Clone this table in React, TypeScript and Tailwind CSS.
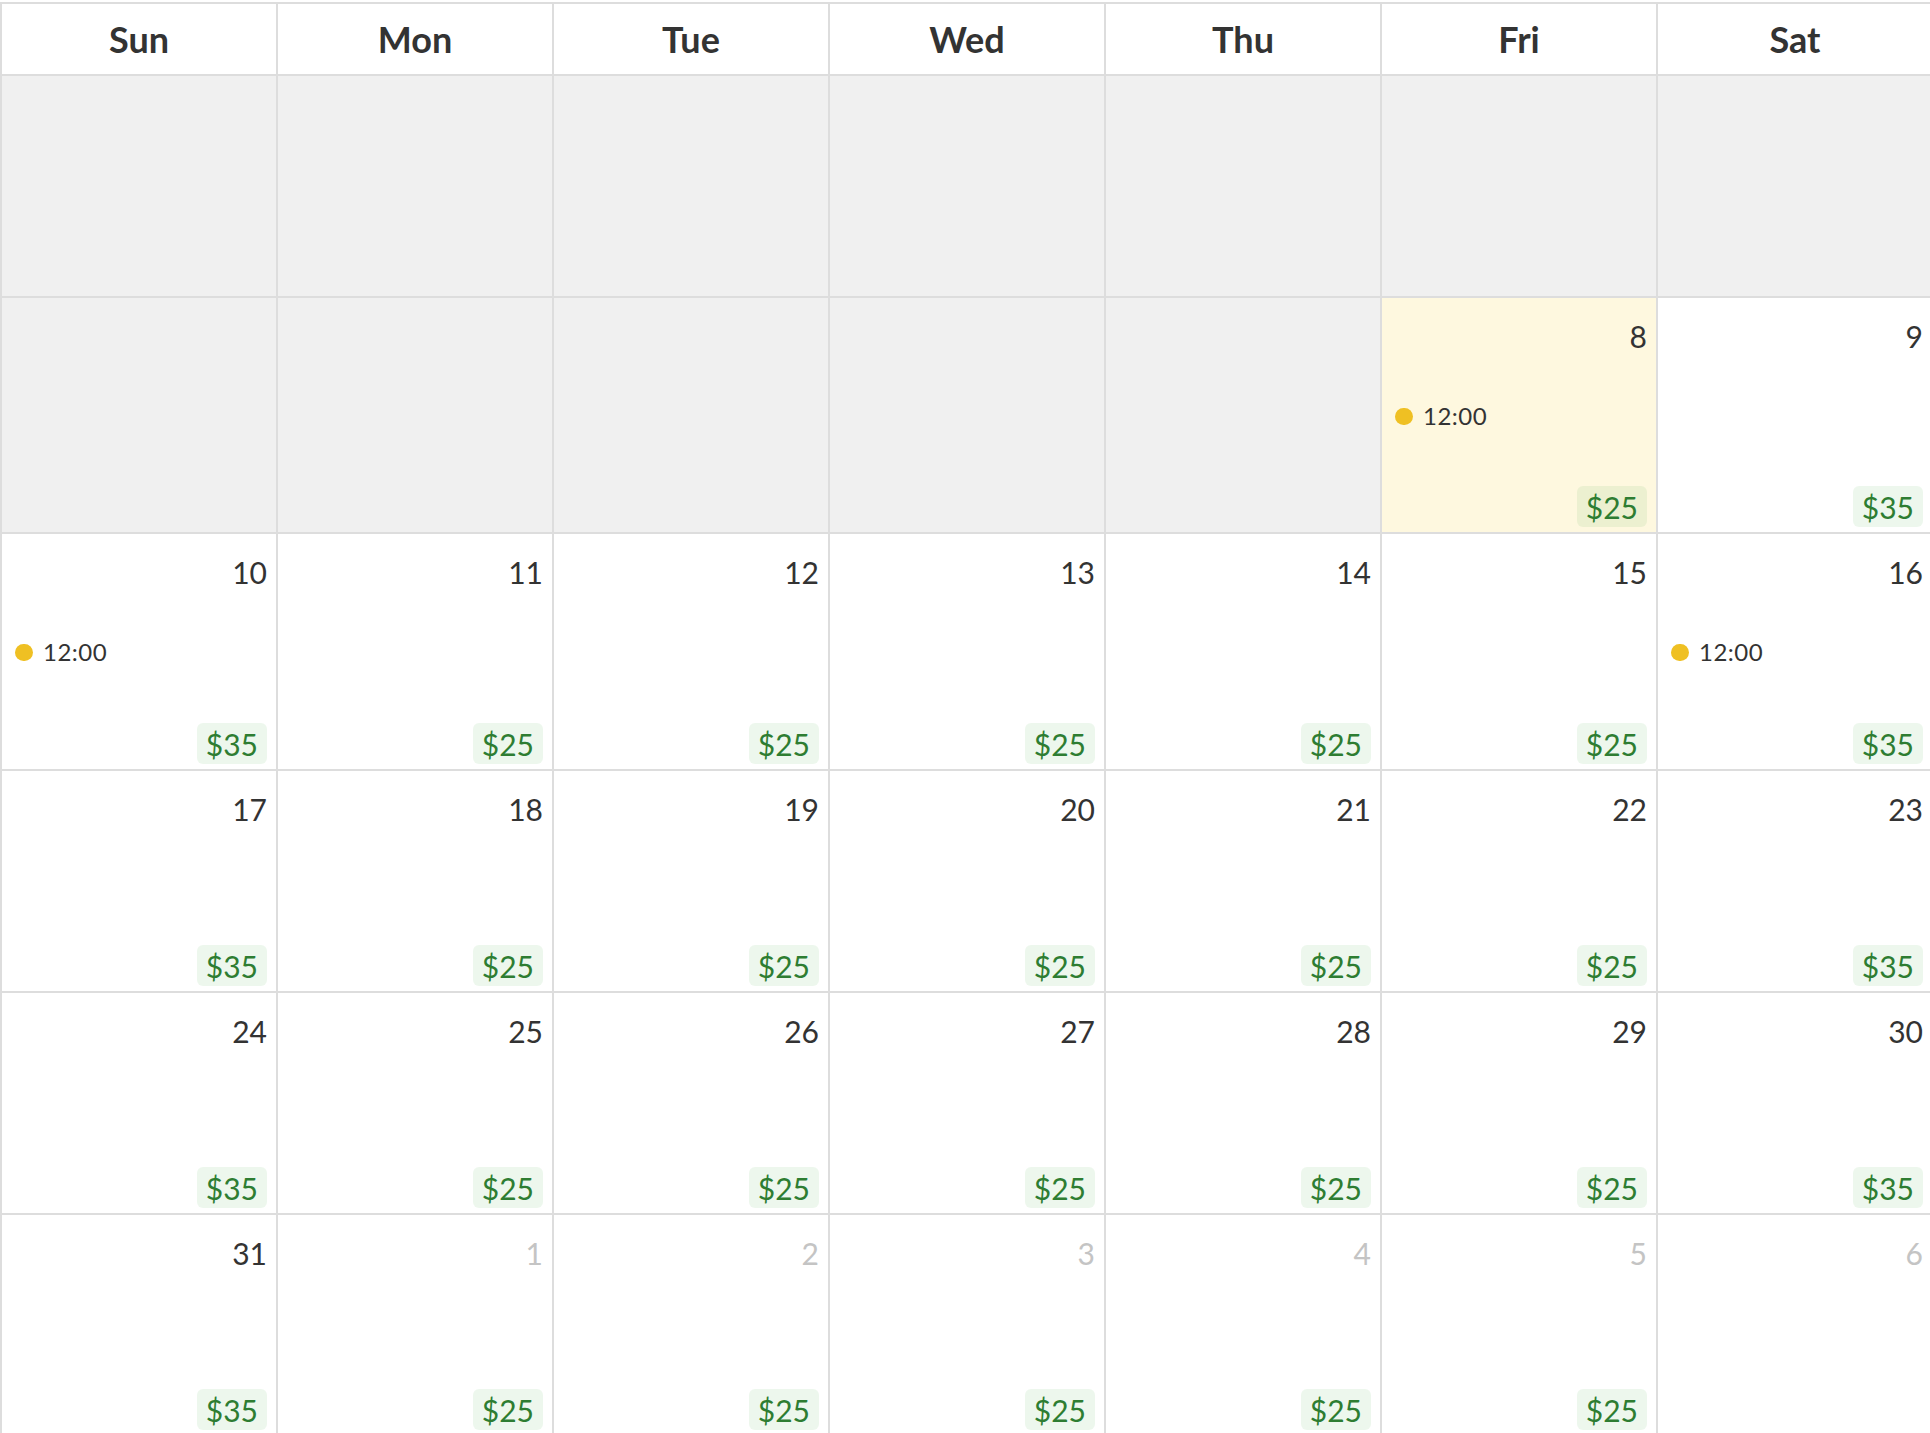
import React from 'react'

type Day = {
  num?: number
  muted?: boolean
  price?: string
  event?: string
  today?: boolean
  blank?: boolean
}

const days = ['Sun', 'Mon', 'Tue', 'Wed', 'Thu', 'Fri', 'Sat']

function priceFor(col: number) {
  return col === 0 || col === 6 ? '$35' : '$25'
}

// build the six weeks of the month
function buildWeeks(): Day[][] {
  const weeks: Day[][] = []
  weeks.push(Array.from({ length: 7 }, () => ({ blank: true })))
  const w2: Day[] = Array.from({ length: 5 }, () => ({ blank: true }))
  w2.push({ num: 8, price: '$25', event: '12:00', today: true })
  w2.push({ num: 9, price: '$35' })
  weeks.push(w2)
  let n = 10
  for (let w = 0; w < 3; w++) {
    const row: Day[] = []
    for (let c = 0; c < 7; c++) {
      const d: Day = { num: n, price: priceFor(c) }
      if (n === 10 || n === 16) d.event = '12:00'
      row.push(d)
      n++
    }
    weeks.push(row)
  }
  const last: Day[] = [{ num: 31, price: '$35' }]
  for (let i = 1; i <= 6; i++) {
    last.push({ num: i, muted: true, price: i < 6 ? '$25' : undefined })
  }
  weeks.push(last)
  return weeks
}

const rowHeights = ['h-[222px]', 'h-[236px]', 'h-[237px]', 'h-[222px]', 'h-[222px]', 'h-[222px]']

function Cell({ day, height }: { day: Day; height: string }) {
  if (day.blank) {
    return <div className={`${height} bg-[#f0f0f0] border-r-2 border-b-2 border-[#dddddd]`} />
  }
  return (
    <div
      className={`${height} flex flex-col border-r-2 border-b-2 border-[#dddddd] pt-[23px] pr-[9px] pb-[5px] ${
        day.today ? 'bg-[#fef8df]' : 'bg-white'
      }`}
    >
      <div
        className={`text-right text-[30px] leading-none ${day.muted ? 'text-[#c4c4c4]' : 'text-[#333333]'}`}
      >
        {day.num}
      </div>
      {day.event && (
        <div className="mt-[50px] pl-[13px] flex items-center gap-[10px] h-[30px]">
          <span className="w-[18px] h-[17px] rounded-full bg-[#efc023]" />
          <span className="text-[24px] tracking-[0.5px] text-[#333333]">{day.event}</span>
        </div>
      )}
      {day.price && (
        <div className="mt-auto flex justify-end">
          <span className="h-[41px] px-[9px] flex items-center rounded-[6px] bg-[rgba(76,175,80,0.1)] text-[#2e7d32] text-[30px] leading-none">
            {day.price}
          </span>
        </div>
      )}
    </div>
  )
}

export default function App() {
  const weeks = buildWeeks()
  return (
    <div className="w-screen h-screen overflow-hidden bg-white font-['Lato','Liberation_Sans',sans-serif]">
      <div className="mt-[2px] w-[1934px] border-l-2 border-t-2 border-[#dddddd]">
        <div className="grid grid-cols-[repeat(7,276px)]">
          {days.map((d) => (
            <div
              key={d}
              className="h-[72px] flex items-center justify-center border-r-2 border-b-2 border-[#dddddd] text-[36px] font-bold text-[#333333]"
            >
              {d}
            </div>
          ))}
        </div>
        {weeks.map((week, i) => (
          <div key={i} className="grid grid-cols-[repeat(7,276px)]">
            {week.map((day, j) => (
              <Cell key={j} day={day} height={rowHeights[i]} />
            ))}
          </div>
        ))}
      </div>
    </div>
  )
}
